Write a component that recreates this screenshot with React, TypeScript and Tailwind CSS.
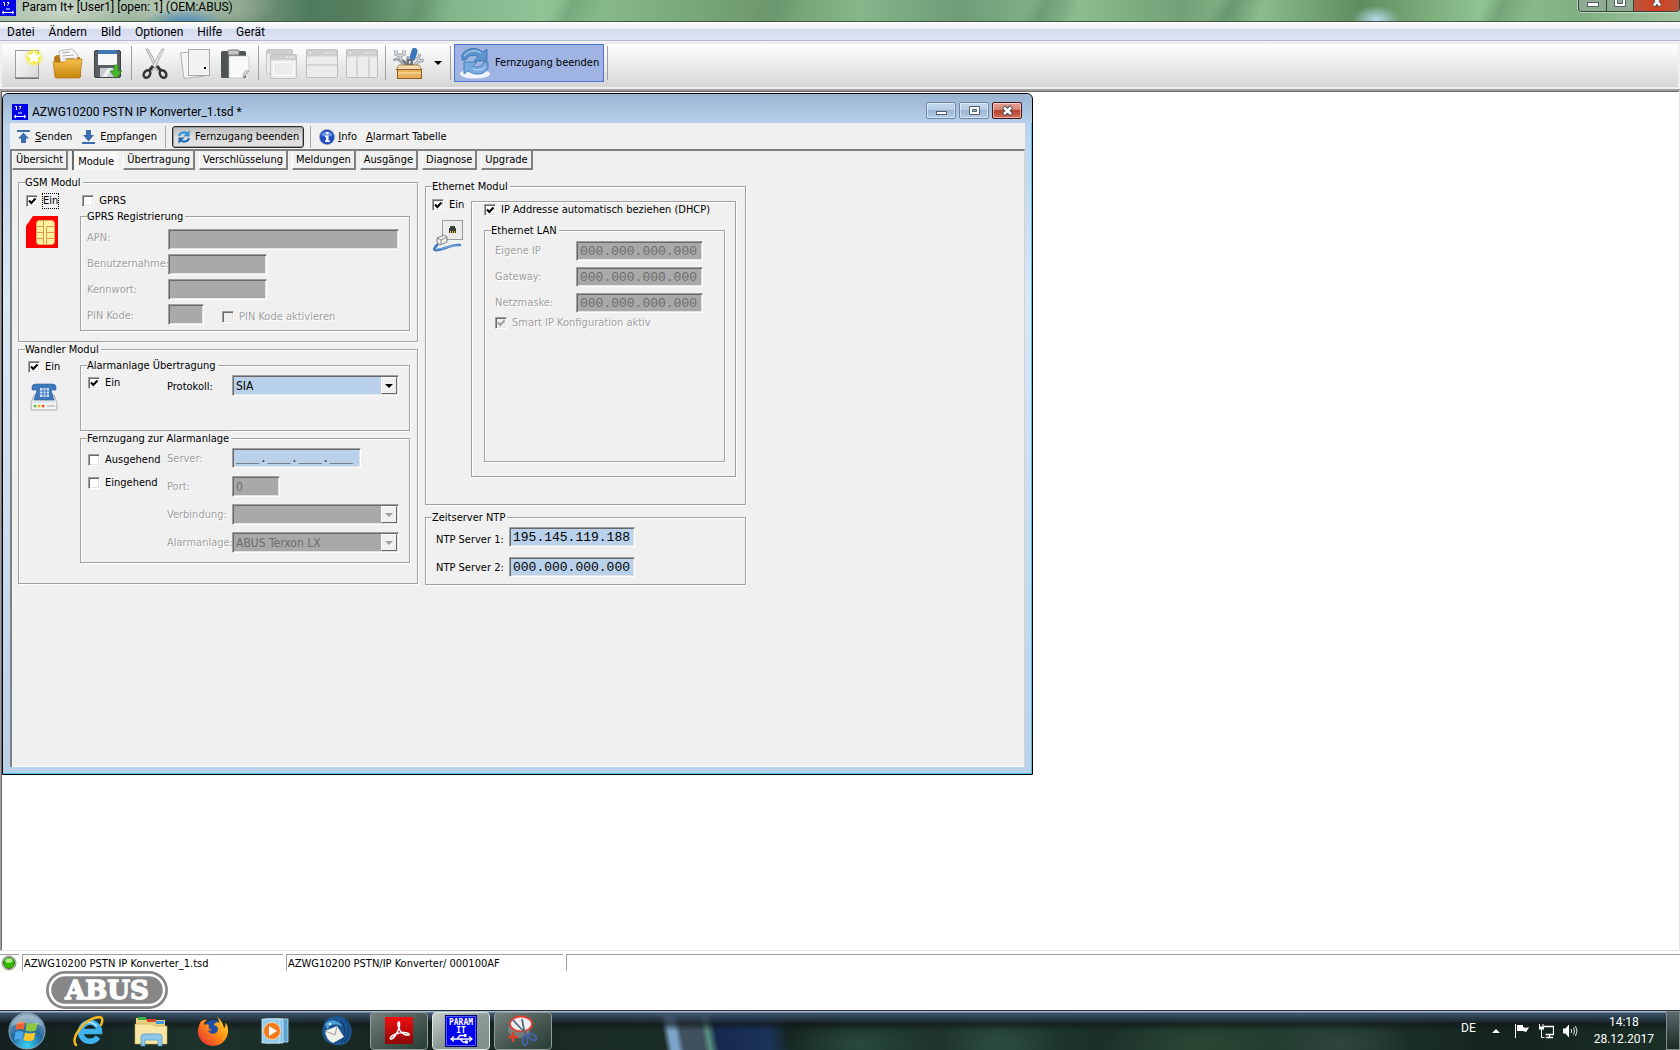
import { ReactNode, useState } from 'react';
import classNames from 'clsx';

const tabs = [
  'Übersicht',
  'Module',
  'Übertragung',
  'Verschlüsselung',
  'Meldungen',
  'Ausgänge',
  'Diagnose',
  'Upgrade',
];

const menus = ['Datei', 'Ändern', 'Bild', 'Optionen', 'Hilfe', 'Gerät'];

const sunken =
  'border border-t-[#a0a0a0] border-l-[#a0a0a0] border-r-white border-b-white shadow-[inset_1px_1px_0_#696969,inset_-1px_-1px_0_#e3e3e3]';

export default function App() {
  return (
    <div className="flex min-h-screen flex-col bg-white font-['DejaVu_Sans_Condensed','DejaVu_Sans',sans-serif] text-[11px] leading-4 text-black">
      <TitleBar />
      <MenuBar />
      <MainToolbar />
      <main className="flex-1 border-t border-l border-r border-b border-t-[#a0a0a0] border-l-[#a0a0a0] border-r-[#e3e3e3] border-b-[#e3e3e3] shadow-[inset_1px_1px_0_#696969]">
        <DeviceWindow />
      </main>
      <StatusBar />
      <Taskbar />
    </div>
  );
}

function TitleBar() {
  return (
    <header className="flex h-[22px] items-start justify-between border-b border-[#3f5844] bg-[radial-gradient(ellipse_40px_14px_at_185px_22px,#4f8cc0,transparent),radial-gradient(ellipse_70px_30px_at_60px_10px,#d4e0d4cc,transparent),radial-gradient(ellipse_110px_24px_at_170px_6px,#c2d4c2cc,transparent),radial-gradient(ellipse_24px_14px_at_1376px_20px,#b8dcf0,transparent),linear-gradient(115deg,transparent_0_24%,#4f7f5a66_25%,transparent_27%_33%,#5a8a6066_34%,transparent_36%_45%,#5f8f6866_46%,transparent_48%_61%,#5f8f6899_62%,transparent_64%_72%,#5a876099_73%,transparent_75%_88%,#5a876077_89%,transparent_91%),linear-gradient(90deg,#a8bca8_0,#7f9a80_240px,#4f7a5c_310px,#557f5e_360px,#82b489_440px,#8fc497_540px,#7fb080_650px,#6f9a6d_760px,#86b68a_860px,#6f9c78_960px,#8bbd8e_1080px,#74a077_1180px,#8cbd8e_1260px,#5f8c61_1360px,#7aa877_1420px,#8fc492_1480px,#7faf82_1580px,#a5c6a5_1680px)] font-['Roboto','Noto_Sans',sans-serif] text-xs">
      <h1 className="flex items-start gap-1.5">
        <ParamLogo />
        <span className="text-xs leading-3.5">Param It+ [User1] [open: 1] (OEM:ABUS)</span>
      </h1>
      <div className="flex h-[12px] overflow-hidden rounded-b border border-t-0 border-[#33473a] shadow-[0_0_0_1px_#d8e8d8aa]">
        <button
          aria-label="Minimieren"
          className="flex w-7 justify-center border-r border-[#33473a] bg-[#8fab92]"
        >
          <svg width="12" height="8" viewBox="0 0 12 8">
            <rect x=".5" y="2.5" width="11" height="4" fill="#fff" stroke="#555f6b" />
          </svg>
        </button>
        <button
          aria-label="Verkleinern"
          className="flex w-[27px] justify-center border-r border-[#33473a] bg-[#8fab92]"
        >
          <svg width="12" height="8" viewBox="0 0 12 8">
            <path d="M.5 0v6.500h11V0" fill="#fff" stroke="#555f6b" />
            <path d="M3.500 0v3.500h5V0" fill="#8fab92" stroke="#555f6b" />
          </svg>
        </button>
        <button
          aria-label="Schließen"
          className="flex w-[45px] justify-center bg-linear-to-r from-[#b8543a] via-[#d4401c] to-[#b8543a]"
        >
          <svg width="12" height="8" viewBox="0 0 12 8">
            <path d="M3 -3l6 9M9 -3l-6 9" stroke="#4a4f5c" strokeWidth="4.500" />
            <path d="M3 -3l6 8.500M9 -3l-6 8.500" stroke="#fff" strokeWidth="2.600" />
          </svg>
        </button>
      </div>
    </header>
  );
}

function MenuBar() {
  return (
    <nav className="flex h-[19px] items-center border-b border-[#b4bbd0] bg-[linear-gradient(180deg,#fff_0,#e9edf6_38%,#d5dcef_40%,#dfe4f5_100%)] pt-0.5 font-['Roboto','Noto_Sans',sans-serif] text-xs">
      {menus.map((m) => (
        <button key={m} className="px-[7px] leading-4">
          {m}
        </button>
      ))}
    </nav>
  );
}

function ToolSeparator() {
  return <span className="mx-[3px] h-[34px] w-px shrink-0 self-center bg-[#a0a0a0]" />;
}

function ToolButton({ label, children }: { label: string; children: ReactNode }) {
  return (
    <button aria-label={label} className="flex w-10 shrink-0 items-center justify-center pt-0.5">
      {children}
    </button>
  );
}

function MainToolbar() {
  return (
    <div className="border-b border-[#a0a0a0] bg-[#f0f0f0] px-0.5 pt-[3px] pb-0.5">
      <div className="flex h-[43px] items-stretch bg-linear-to-b from-white to-[#d6d6d6] pb-[5px] pl-1.5">
        <ToolButton label="Neu">
          <NewIcon />
        </ToolButton>
        <ToolButton label="Öffnen">
          <OpenIcon />
        </ToolButton>
        <ToolButton label="Speichern">
          <SaveIcon />
        </ToolButton>
        <ToolSeparator />
        <ToolButton label="Ausschneiden">
          <CutIcon />
        </ToolButton>
        <ToolButton label="Kopieren">
          <CopyIcon />
        </ToolButton>
        <ToolButton label="Einfügen">
          <PasteIcon />
        </ToolButton>
        <ToolSeparator />
        <ToolButton label="Überlappend">
          <CascadeIcon />
        </ToolButton>
        <ToolButton label="Untereinander">
          <TileIcon d="M1 17h30" />
        </ToolButton>
        <ToolButton label="Nebeneinander">
          <TileIcon d="M11 9v20M23 9v20" />
        </ToolButton>
        <ToolSeparator />
        <ToolButton label="Werkzeuge">
          <ToolboxIcon />
        </ToolButton>
        <button aria-label="Mehr Werkzeuge" className="flex w-[18px] items-center justify-center">
          <svg width="8" height="4" viewBox="0 0 8 4">
            <path d="M0 0h8L4 4z" />
          </svg>
        </button>
        <ToolSeparator />
        <button className="flex items-center gap-1 border border-[#4a74cf] bg-[#9fb4e3] pr-1 pl-1">
          <SyncIcon />
          Fernzugang beenden
        </button>
        <ToolSeparator />
      </div>
    </div>
  );
}

function DeviceWindow() {
  const [active, setActive] = useState('Module');

  return (
    <section className="mt-0.5 ml-px flex w-[1031px] max-w-full flex-col rounded-t-md border border-black bg-linear-to-b from-[#b7d0ea] via-[#dbe8f5] via-30% to-[#b9d1ea] shadow-[inset_-1px_-1px_0_#4fc3e0]">
      <div className="flex h-[29px] shrink-0 items-center justify-between rounded-t-md bg-linear-to-b from-[#9ab4d1] to-[#b7d0ea] pr-2.5 pl-[9px]">
        <h2 className="flex items-center gap-1 pt-1.5 font-['Roboto','Noto_Sans',sans-serif] text-xs">
          <ParamLogo />
          AZWG10200 PSTN IP Konverter_1.tsd *
        </h2>
        <div className="flex gap-[3px] pt-1">
          <WindowButton label="Minimieren">
            <rect x="4.500" y="8.500" width="10" height="3" fill="#fff" stroke="#555f6b" />
          </WindowButton>
          <WindowButton label="Maximieren">
            <path
              d="M4.500 3.500h10v8h-10zM7.500 6.500v2h4v-2z"
              fill="#fff"
              fillRule="evenodd"
              stroke="#555f6b"
            />
          </WindowButton>
          <WindowButton label="Schließen" danger>
            <path d="M5.500 4l8 7.500M13.500 4l-8 7.500" stroke="#4a4f5c" strokeWidth="4.500" />
            <path d="M6 4.500l7 6.500M13 4.500L6 11" stroke="#fff" strokeWidth="2.500" />
          </WindowButton>
        </div>
      </div>

      <div className="mr-[7px] mb-[7px] ml-[7px] flex h-[644px] flex-col bg-[#f0f0f0]">
        <DeviceToolbar />
        <div className="flex-1 border-t-2 border-r border-l-2 border-t-[#808080] border-r-[#d0d0d0] border-l-[#808080] shadow-[inset_0_-1px_0_#fff]">
          <div role="tablist" className="flex h-[19px] gap-1">
            {tabs.map((tab) => (
              <button
                key={tab}
                role="tab"
                aria-selected={tab === active}
                onClick={() => setActive(tab)}
                className={classNames(
                  'h-[19px] whitespace-nowrap',
                  tab === active
                    ? 'mr-px border-l-2 border-[#696969] bg-[#f8f8f8] px-1 pt-0.5'
                    : 'border-r-2 border-b-2 border-l border-r-[#808080] border-b-[#808080] border-l-white px-[3px]',
                )}
              >
                {tab}
              </button>
            ))}
          </div>
          <div className="flex gap-[7px] pl-1.5">
            <div className="w-[400px] shrink-0 pt-[5px]">
              <GsmModule />
              <ConverterModule />
            </div>
            <div className="w-[321px] shrink-0 pt-[9px]">
              <EthernetModule />
              <TimeServer />
            </div>
          </div>
        </div>
      </div>
    </section>
  );
}

function WindowButton({
  label,
  danger,
  children,
}: {
  label: string;
  danger?: boolean;
  children: ReactNode;
}) {
  return (
    <button
      aria-label={label}
      className={classNames(
        'flex h-[17px] w-[30px] items-center justify-center rounded-xs border shadow-[inset_0_0_0_1px_#ffffff80]',
        danger
          ? 'border-[#43121c] bg-[linear-gradient(180deg,#e5a294_0,#d6826f_48%,#b8402a_50%,#d2705c_100%)]'
          : 'border-[#6d86a3] bg-[linear-gradient(180deg,#c3d8ed_0,#b5cce6_48%,#9bb6d4_50%,#b4cce6_100%)]',
      )}
    >
      <svg width="19" height="15" viewBox="0 0 19 15">
        {children}
      </svg>
    </button>
  );
}

function DeviceToolbar() {
  return (
    <div className="flex h-[26px] shrink-0 items-center pt-0.5 pl-[7px]">
      <button className="flex items-center gap-[5px]">
        <svg width="13" height="14" viewBox="0 0 13 14">
          <path d="M0 0h13v2H0zM6.500 2.500L12 8.500H9V13H4V8.500H1z" fill="#3d6eb0" />
        </svg>
        <span>
          <u>S</u>enden
        </span>
      </button>
      <button className="ml-2.5 flex items-center gap-[5px]">
        <svg width="13" height="14" viewBox="0 0 13 14">
          <path d="M0 12h13v2H0zM4 0h5v5h3L6.500 11.500 1 5h3z" fill="#3d6eb0" />
        </svg>
        <span>
          E<u>m</u>pfangen
        </span>
      </button>
      <span className="mr-1.5 ml-2 h-[22px] w-px bg-[#a8a8a8]" />
      <button className="flex h-[22px] items-center gap-1 rounded-[3px] border border-[#2b2b2b] bg-linear-to-b from-[#bcbcbc] via-[#dcdcdc] to-[#e4e4e4] px-1 shadow-[inset_0_0_0_1px_#9a9a9a]">
        <svg width="14" height="14" viewBox="0 0 14 14" fill="none">
          <path d="M2 6c.5-3 5-5 8-2.500" stroke="#2f8fd8" strokeWidth="2.200" />
          <path d="M12.500 0v6.500H6.500z" fill="#2f8fd8" />
          <path d="M12 8c-.5 3-5 5-8 2.500" stroke="#1d6dba" strokeWidth="2.200" />
          <path d="M1.500 14V7.500h6z" fill="#1d6dba" />
        </svg>
        Fernzugang beenden
      </button>
      <span className="mr-2 ml-1.5 h-[22px] w-px bg-[#a8a8a8]" />
      <button className="flex items-center gap-[3px]">
        <svg width="16" height="16" viewBox="0 0 16 16">
          <circle cx="8" cy="8" r="7.500" fill="#1f4fc0" stroke="#8a93a8" strokeDasharray="1.500 1" />
          <path d="M2.500 6a6 6 0 0 1 11 0c-3 2-8 2-11 0z" fill="#6f96e8" />
          <path d="M7 3h2.500v2H7zM6 6.500h3.500v5H11V13H6v-1.500h1V8H6z" fill="#fff" />
        </svg>
        <span>
          <u>I</u>nfo
        </span>
      </button>
      <button className="ml-[9px]">
        <u>A</u>larmart Tabelle
      </button>
    </div>
  );
}

function Group({
  title,
  className,
  contentClassName,
  children,
}: {
  title: string;
  className?: string;
  contentClassName?: string;
  children: ReactNode;
}) {
  return (
    <fieldset
      className={classNames(
        'border border-[#a0a0a0] shadow-[1px_1px_0_#fff,inset_1px_1px_0_#fff]',
        className,
      )}
    >
      <legend className="ml-1.5 h-3.5 bg-[#f0f0f0] pr-0.5 leading-4">{title}</legend>
      <div className={contentClassName}>{children}</div>
    </fieldset>
  );
}

function Check({
  label,
  checked = false,
  disabled = false,
  focused = false,
}: {
  label: string;
  checked?: boolean;
  disabled?: boolean;
  focused?: boolean;
}) {
  const [on, setOn] = useState(checked);

  return (
    <label
      className={classNames('flex h-4 items-center gap-[5px] whitespace-nowrap', {
        'text-[#a0a0a0] [text-shadow:1px_1px_0_#fff]': disabled,
      })}
    >
      <span className="grid size-3 shrink-0">
        <input
          type="checkbox"
          checked={on}
          disabled={disabled}
          onChange={() => setOn(!on)}
          className={classNames(
            'col-start-1 row-start-1 size-3 appearance-none',
            sunken,
            disabled ? 'bg-[#f0f0f0]' : 'bg-white',
          )}
        />
        {on && (
          <svg
            viewBox="0 0 12 12"
            className="pointer-events-none col-start-1 row-start-1 size-3"
            fill="none"
            stroke={disabled ? '#a0a0a0' : '#000'}
            strokeWidth="2"
          >
            <path d="M3 5.500l2.300 2.500L9.500 3.500" />
          </svg>
        )}
      </span>
      <span
        className={classNames('leading-3.5', { 'outline outline-dotted outline-black': focused })}
      >
        {label}
      </span>
    </label>
  );
}

function Field({
  id,
  value = '',
  disabled,
  ip,
  className,
}: {
  id: string;
  value?: string;
  disabled?: boolean;
  ip?: boolean;
  className: string;
}) {
  return (
    <input
      id={id}
      type="text"
      defaultValue={value}
      disabled={disabled}
      className={classNames(
        'block px-[3px]',
        sunken,
        ip ? "h-5 font-['Liberation_Mono',monospace] text-[13px]" : 'h-[21px] text-xs',
        disabled ? 'bg-[#a9a9a9] text-[#6d6d6d]' : 'bg-[#b9d1ea]',
        className,
      )}
    />
  );
}

function Select({
  id,
  value,
  disabled,
}: {
  id: string;
  value: string;
  disabled?: boolean;
}) {
  return (
    <div className="relative w-[167px]">
      <select
        id={id}
        disabled={disabled}
        defaultValue={value}
        className={classNames(
          'block h-[21px] w-full appearance-none pl-[3px] text-xs',
          sunken,
          disabled ? 'bg-[#a9a9a9] text-[#6d6d6d] opacity-100' : 'bg-[#b9d1ea]',
        )}
      >
        <option>{value}</option>
      </select>
      <span className="pointer-events-none absolute top-0.5 right-0.5 flex h-[17px] w-4 items-center justify-center border border-t-white border-r-[#696969] border-b-[#696969] border-l-white bg-[#f0f0f0]">
        <svg width="8" height="4" viewBox="0 0 8 4">
          <path d="M0 0h8L4 4z" fill={disabled ? '#a0a0a0' : '#000'} />
        </svg>
      </span>
    </div>
  );
}

function FieldLabel({
  htmlFor,
  disabled,
  children,
}: {
  htmlFor: string;
  disabled?: boolean;
  children: ReactNode;
}) {
  return (
    <label
      htmlFor={htmlFor}
      className={classNames('block h-4 whitespace-nowrap', {
        'text-[#a0a0a0] [text-shadow:1px_1px_0_#fff]': disabled,
      })}
    >
      {children}
    </label>
  );
}

function GsmModule() {
  return (
    <Group title="GSM Modul" contentClassName="px-[7px] pb-2.5">
      <div className="flex gap-6 pt-1">
        <Check label="Ein" checked focused />
        <Check label="GPRS" />
      </div>
      <div className="flex">
        <div className="w-[54px] shrink-0 pt-[7px]">
          <SimIcon />
        </div>
        <Group
          title="GPRS Registrierung"
          className="flex-1"
          contentClassName="flex px-1.5 pt-1.5 pb-[5px]"
        >
          <div className="flex w-[81px] shrink-0 flex-col gap-2.5 pt-px">
            <FieldLabel htmlFor="apn" disabled>
              APN:
            </FieldLabel>
            <FieldLabel htmlFor="user" disabled>
              Benutzernahme:
            </FieldLabel>
            <FieldLabel htmlFor="password" disabled>
              Kennwort:
            </FieldLabel>
            <FieldLabel htmlFor="pin" disabled>
              PIN Kode:
            </FieldLabel>
          </div>
          <div className="flex flex-col gap-1">
            <Field id="apn" disabled className="w-[231px]" />
            <Field id="user" disabled className="w-[99px]" />
            <Field id="password" disabled className="w-[99px]" />
            <div className="flex items-end gap-[18px]">
              <Field id="pin" disabled className="w-9" />
              <Check label="PIN Kode aktivieren" disabled />
            </div>
          </div>
        </Group>
      </div>
    </Group>
  );
}

function ConverterModule() {
  return (
    <Group title="Wandler Modul" contentClassName="flex px-[7px] pt-0.5 pb-5">
      <div className="flex w-[54px] shrink-0 flex-col gap-2 pt-px pl-0.5">
        <Check label="Ein" checked />
        <PhoneIcon />
      </div>
      <div className="flex-1">
        <Group title="Alarmanlage Übertragung" contentClassName="flex h-[58px] px-[7px] pt-[3px]">
          <div className="w-[79px] shrink-0">
            <Check label="Ein" checked />
          </div>
          <div className="w-[65px] shrink-0 pt-1">
            <FieldLabel htmlFor="protocol">Protokoll:</FieldLabel>
          </div>
          <Select id="protocol" value="SIA" />
        </Group>
        <Group
          title="Fernzugang zur Alarmanlage"
          contentClassName="flex px-[7px] pt-[3px] pb-[9px]"
        >
          <div className="flex w-[79px] shrink-0 flex-col gap-[7px] pt-1">
            <Check label="Ausgehend" />
            <Check label="Eingehend" />
          </div>
          <div className="flex w-[65px] shrink-0 flex-col gap-3 pt-[3px]">
            <FieldLabel htmlFor="server" disabled>
              Server:
            </FieldLabel>
            <FieldLabel htmlFor="port" disabled>
              Port:
            </FieldLabel>
            <FieldLabel htmlFor="connection" disabled>
              Verbindung:
            </FieldLabel>
            <FieldLabel htmlFor="panel" disabled>
              Alarmanlage:
            </FieldLabel>
          </div>
          <div className="flex flex-col gap-[7px]">
            <Field
              id="server"
              ip
              value="___.___.___.___"
              className="mb-px w-[129px] text-[#444]"
            />
            <Field id="port" value="0" disabled className="w-12" />
            <Select id="connection" value="" disabled />
            <Select id="panel" value="ABUS Terxon LX" disabled />
          </div>
        </Group>
      </div>
    </Group>
  );
}

function EthernetModule() {
  return (
    <Group title="Ethernet Modul" contentClassName="flex px-1.5 pb-[27px]">
      <div className="flex w-[39px] shrink-0 flex-col gap-[7px] pt-1">
        <Check label="Ein" checked />
        <NetworkIcon />
      </div>
      <div className="mt-2 w-[265px] border border-[#a0a0a0] pr-2.5 pb-3.5 pl-3 shadow-[1px_1px_0_#fff,inset_1px_1px_0_#fff]">
        <div className="pb-[5px]">
          <Check label="IP Addresse automatisch beziehen (DHCP)" checked />
        </div>
        <Group title="Ethernet LAN" contentClassName="h-[224px] px-2.5 pt-1">
          <div className="flex">
            <div className="flex w-[81px] shrink-0 flex-col gap-2.5 pt-0.5">
              <FieldLabel htmlFor="own-ip" disabled>
                Eigene IP
              </FieldLabel>
              <FieldLabel htmlFor="gateway" disabled>
                Gateway:
              </FieldLabel>
              <FieldLabel htmlFor="netmask" disabled>
                Netzmaske:
              </FieldLabel>
            </div>
            <div className="flex flex-col gap-1.5">
              <Field id="own-ip" ip disabled value="000.000.000.000" className="w-[127px]" />
              <Field id="gateway" ip disabled value="000.000.000.000" className="w-[127px]" />
              <Field id="netmask" ip disabled value="000.000.000.000" className="w-[127px]" />
            </div>
          </div>
          <div className="pt-0.5">
            <Check label="Smart IP Konfiguration aktiv" checked disabled />
          </div>
        </Group>
      </div>
    </Group>
  );
}

function TimeServer() {
  return (
    <Group
      title="Zeitserver NTP"
      className="mt-[5px]"
      contentClassName="flex px-2.5 pt-[3px] pb-[7px]"
    >
      <div className="flex w-[73px] shrink-0 flex-col gap-3 pt-[5px]">
        <FieldLabel htmlFor="ntp1">NTP Server 1:</FieldLabel>
        <FieldLabel htmlFor="ntp2">NTP Server 2:</FieldLabel>
      </div>
      <div className="flex flex-col gap-2.5">
        <Field id="ntp1" ip value="195.145.119.188" className="w-[126px]" />
        <Field id="ntp2" ip value="000.000.000.000" className="w-[126px]" />
      </div>
    </Group>
  );
}

function StatusBar() {
  return (
    <footer className="mt-[3px] h-14">
      <div className="flex h-[17px] gap-[3px] leading-[18px]">
        <div className="w-[19px] border-t border-[#a0a0a0]">
          <svg width="18" height="16" viewBox="0 0 18 16">
            <circle cx="9" cy="8" r="7" fill="#e8e8e8" stroke="#8a8a8a" />
            <circle cx="9" cy="8" r="5.500" fill="#36b800" stroke="#2c6d16" />
            <ellipse cx="9" cy="5.500" rx="3.500" ry="2.300" fill="#a9f08a" />
          </svg>
        </div>
        <div className="w-[261px] border-t border-l border-[#a0a0a0] pl-px">
          AZWG10200 PSTN IP Konverter_1.tsd
        </div>
        <div className="w-[277px] border-t border-l border-[#a0a0a0] pl-px">
          AZWG10200 PSTN/IP Konverter/ 000100AF
        </div>
        <div className="flex-1 border-t border-l border-[#a0a0a0]" />
      </div>
      <svg width="122" height="38" viewBox="0 0 122 38" className="ml-[46px]">
        <rect x="0" y="0" width="122" height="38" rx="19" fill="#868686" />
        <rect x="4" y="4" width="114" height="30" rx="15" fill="#868686" stroke="#fff" strokeWidth="2.500" />
        <text
          x="61"
          y="28"
          textAnchor="middle"
          fill="#fff"
          stroke="#fff"
          strokeWidth="1.500"
          fontFamily="DejaVu Serif, serif"
          fontWeight="bold"
          fontSize="26"
        >
          ABUS
        </text>
      </svg>
    </footer>
  );
}

function TaskButton({
  label,
  state,
  children,
}: {
  label: string;
  state?: 'open' | 'active';
  children: ReactNode;
}) {
  return (
    <button
      aria-label={label}
      className={classNames('flex h-[38px] w-[58px] items-center justify-center rounded-sm', {
        'border border-[#8f9c9a] bg-linear-to-br from-[#76827f] via-[#4a5a55] to-[#263c34]':
          state === 'open',
        'border border-[#dfe6e4] bg-linear-to-br from-[#c9cfcd] via-[#8c9a95] to-[#7d8f88]':
          state === 'active',
      })}
    >
      {children}
    </button>
  );
}

function Taskbar() {
  return (
    <div className="flex h-10 shrink-0 items-center gap-1 border-t border-[#26323f] bg-[linear-gradient(180deg,#a9b6c4_0,#a9b6c4_1px,#3f566b_2px,#2a3a4acc_8px,#10181aaa_13px,transparent_20px),linear-gradient(80deg,transparent_656px,#7ba4c8_662px,#7ba4c8_668px,#41505f_674px,#41505f_694px,#5a9080_700px,#16284e_708px,#1b3358_760px,transparent_780px),radial-gradient(ellipse_80px_30px_at_860px_34px,#294a3c,transparent),radial-gradient(ellipse_60px_30px_at_1000px_34px,#2c4c3f,transparent),radial-gradient(ellipse_100px_30px_at_1200px_34px,#2b4836,transparent),radial-gradient(ellipse_70px_30px_at_1340px_34px,#2f4640,transparent),linear-gradient(90deg,#14201f_0,#1d332c_200px,#16251f_420px,#1a2d26_640px,#15241f_800px,#213a31_1000px,#1a3027_1100px,#223c2e_1300px,#14231d_1500px,#1a3027_100%)]">
      <button aria-label="Start" className="flex w-14 items-center justify-center pr-0.5">
        <StartOrb />
      </button>
      <TaskButton label="Internet Explorer">
        <ExplorerEIcon />
      </TaskButton>
      <TaskButton label="Explorer">
        <FolderIcon />
      </TaskButton>
      <TaskButton label="Firefox">
        <FirefoxIcon />
      </TaskButton>
      <TaskButton label="Media Player">
        <MediaIcon />
      </TaskButton>
      <TaskButton label="Thunderbird">
        <ThunderbirdIcon />
      </TaskButton>
      <TaskButton label="Adobe Reader" state="open">
        <svg width="28" height="27" viewBox="0 0 28 27">
          <defs>
            <linearGradient id="pdf" x2="0" y2="1">
              <stop stopColor="#f01010" />
              <stop offset="1" stopColor="#8e0606" />
            </linearGradient>
          </defs>
          <rect width="28" height="27" fill="url(#pdf)" />
          <path
            d="M14 5c-2 0-1 5 1 8.500s6 5 8.500 4.500-1-3-6-2.500-11 2.500-12 5 2 2 4.500-1.500S16 8 14 5z"
            fill="none"
            stroke="#fff"
            strokeWidth="1.500"
          />
        </svg>
      </TaskButton>
      <TaskButton label="Param It" state="active">
        <svg width="32" height="32" viewBox="0 0 32 32">
          <rect x=".5" y=".5" width="31" height="31" fill="#0000f0" stroke="#000078" />
          <rect x="1.500" y="1.500" width="29" height="29" fill="none" stroke="#8f9cff" strokeWidth=".6" />
          <g
            fill="#fff"
            fontFamily="DejaVu Sans Mono, monospace"
            fontSize="8"
            fontWeight="bold"
            textAnchor="middle"
          >
            <text x="16" y="10">PARAM</text>
            <text x="16" y="18">IT</text>
          </g>
          <path
            d="M6 24h21M9 21.500L6 24l3 2.500M24 21.500l3 2.500-3 2.500M12 24l3-3.500h4M15 24l3 3h3"
            fill="none"
            stroke="#fff"
            strokeWidth="1.300"
          />
          <path d="M19 19h2.500v3H19zM20 25.500h3v3h-3z" fill="#fff" />
        </svg>
      </TaskButton>
      <TaskButton label="Snipping Tool" state="open">
        <svg width="32" height="32" viewBox="0 0 32 32" fill="none">
          <ellipse cx="12" cy="15" rx="11" ry="8" fill="#8b8f93" opacity=".7" />
          <ellipse cx="14" cy="9" rx="11" ry="7.500" fill="#eef0f3" stroke="#e04030" strokeWidth="1.800" />
          <path d="M1 22h10M6 17v10" stroke="#d8402a" strokeWidth="2.500" />
          <path d="M6 5l14 15M15 4l3 16" stroke="#5b6672" strokeWidth="1.800" />
          <ellipse cx="18" cy="25.500" rx="2.500" ry="4.500" stroke="#4463a8" strokeWidth="1.800" />
          <ellipse cx="25.500" cy="22" rx="4.500" ry="2.500" stroke="#4463a8" strokeWidth="1.800" transform="rotate(35 25.500 22)" />
        </svg>
      </TaskButton>

      <div className="ml-auto flex h-full items-center font-['Roboto','Noto_Sans',sans-serif] text-xs text-white">
        <span className="mr-4 mb-1.5">DE</span>
        <svg width="8" height="4" viewBox="0 0 8 4" className="mr-3.5">
          <path d="M4 0l4 4H0z" fill="#fff" />
        </svg>
        <svg width="16" height="16" viewBox="0 0 16 16" className="mr-2">
          <path d="M1 1h1v14H1zM3 2h6v6H3zM9 4c2 1 3 1 6 0-1 2-2 4-3 5l-3-1z" fill="#fff" />
        </svg>
        <svg width="16" height="16" viewBox="0 0 16 16" className="mr-2" fill="none">
          <path d="M5.500 3.500h10v8h-8M8 14.500h7M11.500 12v2" stroke="#fff" strokeWidth="1.300" />
          <path d="M1.500 1v3M5 1v3M3.500 6v8.500h3" stroke="#fff" />
          <path d="M1 3.500h5v3H1z" fill="#fff" />
        </svg>
        <svg width="16" height="16" viewBox="0 0 16 16" fill="none">
          <path d="M1 5.500h2.500L7 1.500v13L3.500 10.500H1z" fill="#fff" />
          <path d="M9 6q1.500 2 0 4M11.500 4.500q2 3.500 0 7M13.500 3q3 5 0 10" stroke="#dfe5e2" />
        </svg>
        <div className="ml-4 text-center leading-[17px]">
          <div>14:18</div>
          <div>28.12.2017</div>
        </div>
        <button
          aria-label="Desktop anzeigen"
          className="ml-3 h-full w-3.5 border border-[#7f8e8a] bg-linear-to-b from-[#5a6a6c] to-[#1a2b24]"
        />
      </div>
    </div>
  );
}

function ParamLogo() {
  return (
    <svg width="16" height="16" viewBox="0 0 16 16" className="shrink-0">
      <rect width="16" height="16" fill="#0000e8" />
      <path
        d="M3 2.500h1.500V6M7 2.500h2L7.500 5.500M7 8v2M9 8v2M2 12.500h12M4 11l-2 1.500L4 14M12 11l2 1.500-2 1.500"
        fill="none"
        stroke="#fff"
      />
    </svg>
  );
}

function NewIcon() {
  return (
    <svg width="32" height="32" viewBox="0 0 32 32">
      <defs>
        <radialGradient id="glow">
          <stop stopColor="#fffbe0" />
          <stop offset=".55" stopColor="#f5ee3a" />
          <stop offset="1" stopColor="#f5ee3a" stopOpacity="0" />
        </radialGradient>
        <linearGradient id="sheet" x2="1" y2="1">
          <stop stopColor="#fff" />
          <stop offset="1" stopColor="#d8d8d8" />
        </linearGradient>
      </defs>
      <rect x="3.500" y="2.500" width="23" height="27" fill="url(#sheet)" stroke="#9a9a9a" />
      <path d="M3 30.500h24" stroke="#777" />
      <circle cx="22" cy="9.500" r="9.500" fill="url(#glow)" />
      <path d="M22 2l2 4.500 5 .5-3.700 3.300 1 4.700-4.300-2.500-4.300 2.500 1-4.700L15 7l5-.5z" fill="#fff" />
    </svg>
  );
}

function OpenIcon() {
  return (
    <svg width="32" height="32" viewBox="0 0 32 32">
      <defs>
        <linearGradient id="folder" x2="0" y2="1">
          <stop stopColor="#f3c04c" />
          <stop offset="1" stopColor="#c9860c" />
        </linearGradient>
      </defs>
      <path d="M2 9l3-2h4l2 2h17l1 20H3z" fill="#b87a12" />
      <path d="M7 3l13-2 5 5 1 12H9z" fill="#fafafa" stroke="#999" strokeWidth=".7" />
      <path d="M10 5l8-1M10 8l12-1M11 11l12-1" stroke="#aaa" />
      <path d="M1 14h12l2-3h15l-2 18q0 1-1 1H4q-1 0-1-1z" fill="url(#folder)" stroke="#a86d08" strokeWidth=".6" />
    </svg>
  );
}

function SaveIcon() {
  return (
    <svg width="32" height="32" viewBox="0 0 32 32">
      <rect x="2.500" y="2.500" width="26" height="27" rx="1.500" fill="#5a5f63" stroke="#3c4145" />
      <rect x="6" y="2" width="19" height="4" fill="#3f76b5" />
      <rect x="6" y="6" width="19" height="11" fill="#f7f7f7" />
      <rect x="8" y="20" width="16" height="9" fill="#c9ccd0" />
      <path d="M10 29l6-9h4l-5 9z" fill="#eceef0" />
      <path d="M22 17h4v6h4l-6 7.500L18 23h4z" fill="#4cb52c" stroke="#2f8517" strokeWidth=".7" />
    </svg>
  );
}

function CutIcon() {
  return (
    <svg width="32" height="32" viewBox="0 0 32 32" fill="none">
      <path d="M7 1l2 0 11 20-2 2z" fill="#e6e6e6" stroke="#8c8c8c" strokeWidth=".7" />
      <path d="M25 1h-2L12 21l2 2z" fill="#f3f3f3" stroke="#8c8c8c" strokeWidth=".7" />
      <path d="M14 18l-4 5M18 18l4 5" stroke="#333" strokeWidth="3" />
      <ellipse cx="8" cy="26" rx="3" ry="4" stroke="#333" strokeWidth="2.400" transform="rotate(35 8 26)" />
      <ellipse cx="24" cy="26" rx="3" ry="4" stroke="#333" strokeWidth="2.400" transform="rotate(-35 24 26)" />
    </svg>
  );
}

function CopyIcon() {
  return (
    <svg width="32" height="32" viewBox="0 0 32 32">
      <path d="M1.500 5l21-2.500L26 28 5 30.500z" fill="#f5f5f5" stroke="#b0b0b0" />
      <rect x="9.500" y="1.500" width="21" height="26" fill="#f2f2f2" stroke="#a8a8a8" />
      <rect x="25" y="19" width="2" height="2" />
    </svg>
  );
}

function PasteIcon() {
  return (
    <svg width="32" height="32" viewBox="0 0 32 32">
      <rect x="2" y="3" width="25" height="27" rx="1.500" fill="#505354" />
      <rect x="9" y="2" width="11" height="5" rx="1" fill="#c8c8c8" stroke="#777" />
      <path d="M10 8h20v16l-6 6H10z" fill="#fafafa" stroke="#bbb" strokeWidth=".7" />
      <path d="M30 23c-3-1-6 0-6 7 2-3 4-5 6-7z" fill="#d5d5d5" stroke="#999" strokeWidth=".7" />
    </svg>
  );
}

function CascadeIcon() {
  return (
    <svg width="32" height="32" viewBox="0 0 32 32" fill="none" stroke="#c4c4c4">
      <rect x=".5" y="1.500" width="26" height="24" rx="1.500" fill="#ececec" />
      <path d="M1 4h25" stroke="#cdcdcd" strokeWidth="4" />
      <rect x="4.500" y="6.500" width="26" height="24" rx="1.500" fill="#ececec" />
      <path d="M5 9.500h25" stroke="#cdcdcd" strokeWidth="5" />
      <path d="M20 9h8" stroke="#fff" strokeDasharray="2 1" />
      <rect x="7.500" y="14.500" width="20" height="13" stroke="#fff" />
    </svg>
  );
}

function TileIcon({ d }: { d: string }) {
  return (
    <svg width="32" height="32" viewBox="0 0 32 32" fill="none" stroke="#bdbdbd">
      <rect x=".5" y="1.500" width="31" height="28" rx="1.500" fill="#ececec" />
      <path d="M1 5h30" stroke="#cfcfcf" strokeWidth="7" />
      <path d="M19 5h10M3 5h4" stroke="#f4f4f4" strokeDasharray="2 1.500" />
      <path d={d} />
    </svg>
  );
}

function ToolboxIcon() {
  return (
    <svg width="32" height="32" viewBox="0 0 32 32" fill="none">
      <path d="M10 17L7 9M3 2v4l4 2 4-2V2" stroke="#8b9095" strokeWidth="3.200" />
      <path d="M10 17L7 9M3 2v4l4 2 4-2V2" stroke="#d9dcdf" strokeWidth="1.800" />
      <path d="M0 12l4-1 9 6M15 8l-2 9" stroke="#a4a9ad" strokeWidth="2.600" />
      <path d="M21.500 3l-2 7" stroke="#3b74bf" strokeWidth="6" strokeLinecap="round" />
      <path d="M19 12l-2 5" stroke="#8b9095" strokeWidth="2" />
      <path d="M31 12l-4 1-2-3 2-4M26 12l-5 6" stroke="#8b9095" strokeWidth="3" />
      <path d="M31 12l-4 1-2-3 2-4M26 12l-5 6" stroke="#d3d6d9" strokeWidth="1.600" />
      <path d="M10 12l4 5M15 12h4v5h-4z" stroke="#6e7276" strokeWidth="2" />
      <path d="M6 17h20l3 5H3z" fill="#f6d9ac" stroke="#8e6734" strokeWidth=".7" />
      <rect x="4.500" y="21.500" width="24" height="9" fill="#e8b35c" stroke="#8e5f22" />
      <path d="M5 25h23" stroke="#fbe3b8" />
    </svg>
  );
}

function SyncIcon() {
  return (
    <svg width="32" height="32" viewBox="0 0 32 32" className="shrink-0">
      <ellipse cx="16" cy="27" rx="15" ry="4.500" fill="#fff" opacity=".85" />
      <path
        d="M3 13V8C6 1 17-1 24 5l4-3v12H15l4-4c-4-3-10-2-12 3z"
        fill="#5b93cf"
        stroke="#2f68a5"
        strokeWidth=".7"
      />
      <path
        d="M29 15v6c-3 7-13 8-20 3l-4 3V15h13l-4 4c4 2 9 1 11-4z"
        fill="#78abe0"
        stroke="#2f68a5"
        strokeWidth=".7"
      />
      <path d="M5 9c4-5 11-7 17-3M27 19c-3 4-8 5-13 3" fill="none" stroke="#c6dff5" />
    </svg>
  );
}

function SimIcon() {
  return (
    <svg width="32" height="32" viewBox="0 0 32 32">
      <path d="M7 0h25v32H0V10z" fill="#fe0000" />
      <rect x="10.500" y="4.500" width="18" height="24" rx="3" fill="#fff3a0" stroke="#e8a858" />
      <path
        d="M10.500 10.500h7M10.500 16.500h7M10.500 22.500h7M17.500 5v23.500M20.500 10.500v17.500M20.500 10.500h8M20.500 16.500h8M20.500 22.500h8"
        fill="none"
        stroke="#e09a50"
      />
    </svg>
  );
}

function PhoneIcon() {
  return (
    <svg width="32" height="28" viewBox="0 0 32 28">
      <path d="M6 12h20l3 8v6q0 1-1 1H4q-1 0-1-1v-6z" fill="#e3e6e8" stroke="#9fa4a8" strokeWidth=".8" />
      <path d="M4 20h24v6H4z" fill="#f4f4f4" />
      <path d="M4 4q0-3 4-3h16q4 0 4 3v3h-5l3 10H6L9 7H4z" fill="#3f78bd" stroke="#2a5a98" strokeWidth=".6" />
      <path d="M12 5h9v9h-9z" fill="#cfe0f2" />
      <path d="M15 5v9M18 5v9M12 8h9M12 11h9" stroke="#3f78bd" />
      <circle cx="7" cy="23" r="1.500" fill="#5cc02e" />
      <circle cx="11" cy="23" r="1.500" fill="#e8b030" />
      <circle cx="15" cy="23" r="1.500" fill="#e85c20" />
      <path d="M19 23h8" stroke="#ccc" strokeWidth="2" />
    </svg>
  );
}

function NetworkIcon() {
  return (
    <svg width="32" height="32" viewBox="0 0 32 32" fill="none">
      <rect x="10.500" y=".5" width="20" height="19" fill="#ececec" stroke="#9a9a9a" />
      <path d="M17 8h1V6h5v2h1v5h-7z" fill="#3a3f38" />
      <path d="M18.500 11v2M20.500 11v2M22.500 11v2" stroke="#e0c020" />
      <path d="M6 24C-2 32 4 31 13 28s16-4 15-2" stroke="#3b76bd" strokeWidth="2.500" />
      <path d="M3 29c8 1 14-4 24-3" stroke="#8ab4e4" />
      <path d="M5 18l7-3 3 2v5l-7 3-3-3z" fill="#eee" stroke="#666" strokeWidth=".8" />
      <path d="M5 18l4 2 6-3M9 20v5" stroke="#777" strokeWidth=".8" />
    </svg>
  );
}

function StartOrb() {
  return (
    <svg width="38" height="38" viewBox="0 0 38 38">
      <defs>
        <radialGradient id="orb" cy=".9" r=".9">
          <stop stopColor="#3fd0f5" />
          <stop offset=".5" stopColor="#2368a0" />
          <stop offset="1" stopColor="#8ba6b8" />
        </radialGradient>
      </defs>
      <circle cx="19" cy="19" r="18" fill="url(#orb)" stroke="#8fa9b8" />
      <path d="M9 11q4-3 8-1l-1.500 8q-4-2-8 0z" fill="#f0622c" />
      <path d="M19 10.500q5 2 11 0l-2 8q-5 2-10.500 0z" fill="#8fc63e" />
      <path d="M7.500 20q4-2 8 0L14 28q-4-2-8 0z" fill="#4aa8e8" />
      <path d="M17 20.500q5 2 10.500 0l-2 7.500q-5 2-10 0z" fill="#fcc62d" />
      <path d="M3 14A17 17 0 0 1 35 14Q19 8 3 14z" fill="#fff" opacity=".3" />
    </svg>
  );
}

function ExplorerEIcon() {
  return (
    <svg width="32" height="32" viewBox="0 0 32 32" fill="none">
      <path d="M25 22a9.500 9.500 0 1 1 1.500-5.500H10" stroke="#3fb2ee" strokeWidth="5.500" />
      <path d="M9 10q8-6 15 1" stroke="#b4ebff" strokeWidth="1.500" />
      <path
        d="M3 30C-3 24 10 4 26 2c4 0 4 4 2 8"
        stroke="#f4b81c"
        strokeWidth="2.500"
        strokeLinecap="round"
      />
    </svg>
  );
}

function FolderIcon() {
  return (
    <svg width="34" height="32" viewBox="0 0 34 32">
      <path d="M2 3h9l2 2h18v22H2z" fill="#e8cf7c" />
      <path d="M4 2h8v3H4z" fill="#3fae49" />
      <path d="M13 4h9v3h-9z" fill="#d8452c" />
      <path d="M22 6h8v3h-8z" fill="#3a9be0" />
      <path d="M1 9h17l2 2h13v18H1z" fill="#f8e7a4" stroke="#c9a94e" strokeWidth=".6" />
      <path d="M7 31v-9q0-3 3-3h15q3 0 3 3v9h-4v-6H11v6z" fill="#8fc8ea" stroke="#4a92c4" strokeWidth=".7" />
    </svg>
  );
}

function FirefoxIcon() {
  return (
    <svg width="32" height="32" viewBox="0 0 32 32">
      <defs>
        <linearGradient id="fox" x1="1" x2="0" y2="1">
          <stop stopColor="#ffe32e" />
          <stop offset=".5" stopColor="#ff8a16" />
          <stop offset="1" stopColor="#e5203c" />
        </linearGradient>
      </defs>
      <circle cx="16" cy="15" r="10" fill="#1f4fa8" />
      <path
        d="M20 1c2 3 1 5 3 7-3-2-6 0-6 2 4 1 5 4 3 7-3 3-8 2-9-2 1 1 3 1 4 0-3-1-4-2-3-5-2-1-4-1-5 0 0-2 1-4 3-5-4-1-7 1-8 6-4 9 3 20 14 20s18-11 14-21c-1-2-2-2-2-2 1 2 0 4-1 5-1-6-4-8-7-12z"
        fill="url(#fox)"
      />
    </svg>
  );
}

function MediaIcon() {
  return (
    <svg width="28" height="28" viewBox="0 0 28 28">
      <path d="M8 2h19v23H8z" fill="#5aa5d0" stroke="#bfe2f5" strokeWidth=".8" />
      <path d="M4 2h18v24H4z" fill="#7fc0e4" stroke="#d5eefa" strokeWidth=".8" />
      <path d="M1 2h18v24H1z" fill="#93cdec" stroke="#d5eefa" strokeWidth=".8" />
      <circle cx="11" cy="14" r="8.500" fill="#f07a1c" stroke="#ffd0a0" />
      <path d="M8 9l8 5-8 5z" fill="#fff" />
    </svg>
  );
}

function ThunderbirdIcon() {
  return (
    <svg width="32" height="32" viewBox="0 0 32 32">
      <path d="M3 9C6 1 18-2 26 5c6 6 6 16 1 22-5 4-12 4-16 2C2 27-1 18 3 9z" fill="#1d5591" />
      <path d="M4 9c5-6 14-4 18 3-5-4-10-3-14-1-1 6-2 4-4-2z" fill="#4aa0dc" />
      <path d="M24 5c5 6 5 16-1 22M20 6c5 6 5 14 0 21" fill="none" stroke="#0f3c78" strokeWidth="1.200" />
      <path d="M4 16l12-5 7 11-11 6q-7-3-8-12z" fill="#f1efe9" />
      <path d="M4 16l10 4 2-9" fill="none" stroke="#9a9a94" />
      <circle cx="9" cy="9" r="1.200" fill="#fff" />
    </svg>
  );
}
